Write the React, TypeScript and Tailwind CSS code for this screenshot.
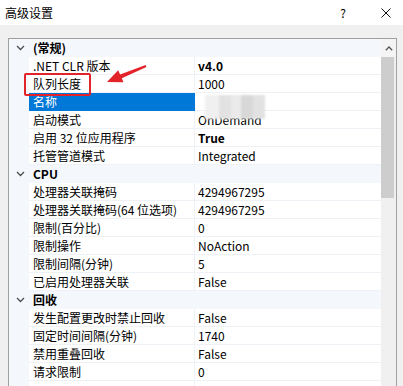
import React from "react";

type Item = { name: string; value: string; bold?: boolean; selected?: boolean };
type Section = { title: string; items: Item[] };

const sections: Section[] = [
  {
    title: "(常规)",
    items: [
      { name: ".NET CLR 版本", value: "v4.0", bold: true },
      { name: "队列长度", value: "1000" },
      { name: "名称", value: "", selected: true },
      { name: "启动模式", value: "OnDemand" },
      { name: "启用 32 位应用程序", value: "True", bold: true },
      { name: "托管管道模式", value: "Integrated" },
    ],
  },
  {
    title: "CPU",
    items: [
      { name: "处理器关联掩码", value: "4294967295" },
      { name: "处理器关联掩码(64 位选项)", value: "4294967295" },
      { name: "限制(百分比)", value: "0" },
      { name: "限制操作", value: "NoAction" },
      { name: "限制间隔(分钟)", value: "5" },
      { name: "已启用处理器关联", value: "False" },
    ],
  },
  {
    title: "回收",
    items: [
      { name: "发生配置更改时禁止回收", value: "False" },
      { name: "固定时间间隔(分钟)", value: "1740" },
      { name: "禁用重叠回收", value: "False" },
      { name: "请求限制", value: "0" },
      { name: "", value: "" },
    ],
  },
];

function Chevron() {
  return (
    <svg width="9" height="6" viewBox="0 0 9 6" className="ml-[7px]">
      <path d="M1 1 L4.5 4.5 L8 1" fill="none" stroke="#4d4d4d" strokeWidth="1.3" />
    </svg>
  );
}

function CategoryRow({ title }: { title: string }) {
  return (
    <div className="flex h-[18px] items-center bg-[#f4f7fc]">
      <div className="w-[20px] flex items-center">
        <Chevron />
      </div>
      <span className="pl-[4px] font-bold">{title}</span>
    </div>
  );
}

function ItemRow({ item }: { item: Item }) {
  return (
    <div className="flex h-[18px]">
      <div className="w-[20px] shrink-0 bg-[#f4f7fc]" />
      <div
        className={
          item.selected
            ? "w-[166px] shrink-0 flex items-center pl-[4px] bg-[#0078d7] text-white border-b border-[#0078d7]"
            : "w-[166px] shrink-0 flex items-center pl-[4px] border-b border-r border-[#eef1f6]"
        }
      >
        <span className="whitespace-nowrap">{item.name}</span>
      </div>
      <div className="flex-1 flex items-center pl-[3px] border-b border-[#eef1f6]">
        <span className={item.bold ? "font-bold whitespace-nowrap" : "whitespace-nowrap"}>{item.value}</span>
      </div>
    </div>
  );
}

export default function App() {
  return (
    <div className="relative w-[403px] h-[386px] overflow-hidden bg-[#f0f0f0] text-[12px] leading-none text-black font-['Noto_Sans_CJK_SC','Noto_Sans',sans-serif]">
      {/* title bar */}
      <div className="h-[25px] bg-white flex items-center pl-[5px]">
        <span>高级设置</span>
        <span className="ml-auto mr-[35px]">?</span>
        <svg width="10" height="10" viewBox="0 0 10 10" className="mr-[12px]">
          <path d="M0.5 0.5 L9.5 9.5 M9.5 0.5 L0.5 9.5" stroke="#111" strokeWidth="1" />
        </svg>
      </div>

      {/* property grid */}
      <div className="pt-[13px] pl-[8px] pr-[6px]">
        <div className="flex border border-[#a0a0a0] bg-white h-[400px]">
          <div className="flex-1 flex flex-col">
            {sections.map((s) => (
              <div key={s.title} className="flex flex-col">
                <CategoryRow title={s.title} />
                {s.items.map((it, i) => (
                  <ItemRow key={i} item={it} />
                ))}
              </div>
            ))}
          </div>
          <div className="w-[15px] flex flex-col bg-[#f0f0f0]">
            <div className="h-[18px] flex items-center justify-center bg-[#f4f4f4]">
              <svg width="8" height="5" viewBox="0 0 8 5">
                <path d="M0.8 4.2 L4 1 L7.2 4.2" fill="none" stroke="#555" strokeWidth="1.3" />
              </svg>
            </div>
            <div className="h-[141px] w-[13px] bg-[#cdcdcd]" />
          </div>
        </div>
      </div>

      {/* blurred value of 名称 */}
      <div className="absolute left-[205px] top-[95px] w-[60px] h-[24px] blur-[1px]">
        <div className="flex h-full">
          <div className="w-[14px] bg-[#f0f0f0]" />
          <div className="w-[12px] bg-[#e2e2e2]" />
          <div className="w-[10px] bg-[#eaeaea]" />
          <div className="w-[12px] bg-[#d8d8d8]" />
          <div className="w-[12px] bg-[#e2e2e2]" />
        </div>
      </div>

      {/* red annotation */}
      <div className="absolute left-[24px] top-[73px] w-[67px] h-[23px] border-2 border-[#e3232a] rounded-[2px]" />
      <svg className="absolute left-0 top-0" width="403" height="386" viewBox="0 0 403 386">
        <polygon
          points="107,82 123.5,82.3 121.8,78.2 146.4,67 145.6,65 120.1,74.5 118.2,70.3"
          fill="#e3232a"
        />
      </svg>
    </div>
  );
}
